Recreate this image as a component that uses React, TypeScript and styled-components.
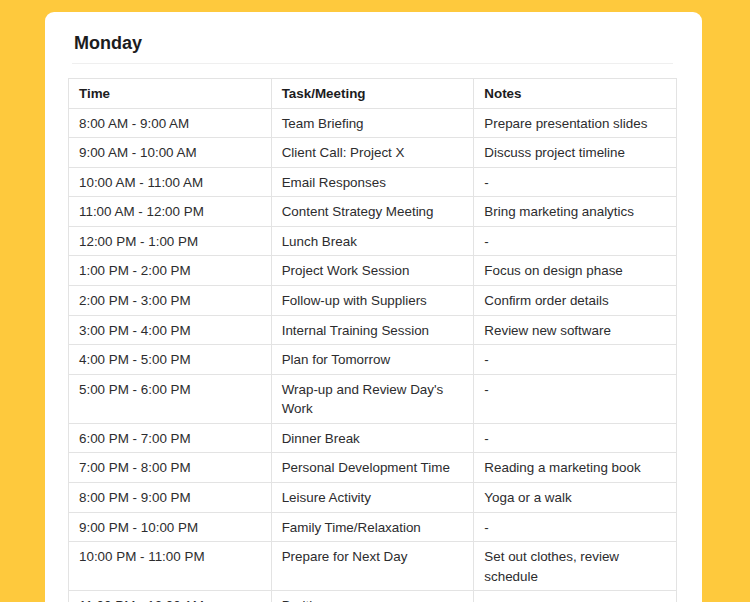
import React from "react";
import styled, { createGlobalStyle } from "styled-components";

type Row = { time: string; task: string; notes: string };

const rows: Row[] = [
  { time: "8:00 AM - 9:00 AM", task: "Team Briefing", notes: "Prepare presentation slides" },
  { time: "9:00 AM - 10:00 AM", task: "Client Call: Project X", notes: "Discuss project timeline" },
  { time: "10:00 AM - 11:00 AM", task: "Email Responses", notes: "-" },
  { time: "11:00 AM - 12:00 PM", task: "Content Strategy Meeting", notes: "Bring marketing analytics" },
  { time: "12:00 PM - 1:00 PM", task: "Lunch Break", notes: "-" },
  { time: "1:00 PM - 2:00 PM", task: "Project Work Session", notes: "Focus on design phase" },
  { time: "2:00 PM - 3:00 PM", task: "Follow-up with Suppliers", notes: "Confirm order details" },
  { time: "3:00 PM - 4:00 PM", task: "Internal Training Session", notes: "Review new software" },
  { time: "4:00 PM - 5:00 PM", task: "Plan for Tomorrow", notes: "-" },
  { time: "5:00 PM - 6:00 PM", task: "Wrap-up and Review Day's Work", notes: "-" },
  { time: "6:00 PM - 7:00 PM", task: "Dinner Break", notes: "-" },
  { time: "7:00 PM - 8:00 PM", task: "Personal Development Time", notes: "Reading a marketing book" },
  { time: "8:00 PM - 9:00 PM", task: "Leisure Activity", notes: "Yoga or a walk" },
  { time: "9:00 PM - 10:00 PM", task: "Family Time/Relaxation", notes: "-" },
  { time: "10:00 PM - 11:00 PM", task: "Prepare for Next Day", notes: "Set out clothes, review schedule" },
  { time: "11:00 PM - 12:00 AM", task: "Bedtime", notes: "-" },
];

const App: React.FC = () => {
  return (
    <Page>
      <GlobalStyle />
      <Card>
        <DayHeader>
          <DayTitle>Monday</DayTitle>
        </DayHeader>
        <Schedule>
          <thead>
            <tr>
              <HeadCell>Time</HeadCell>
              <HeadCell>Task/Meeting</HeadCell>
              <HeadCell>Notes</HeadCell>
            </tr>
          </thead>
          <tbody>
            {rows.map((r) => (
              <tr key={r.time}>
                <Cell>{r.time}</Cell>
                <Cell>{r.task}</Cell>
                <Cell>{r.notes}</Cell>
              </tr>
            ))}
          </tbody>
        </Schedule>
      </Card>
    </Page>
  );
};

const GlobalStyle = createGlobalStyle`
  html, body {
    margin: 0;
    background: #fec93d;
    font-family: "Liberation Sans", Arial, sans-serif;
    -webkit-font-smoothing: antialiased;
  }
`;

const Page = styled.div`
  height: 602px;
  overflow: hidden;
  padding: 12px 48px 0 45px;
  box-sizing: border-box;
`;

const Card = styled.div`
  background: #ffffff;
  border-radius: 9px;
  padding: 19px 25px 24px 23px;
`;

const DayHeader = styled.div`
  margin: 0 4px 15px 4px;
  padding: 0 0 8px 2px;
  border-bottom: 1px solid #efefef;
`;

const DayTitle = styled.h2`
  margin: 0;
  font-size: 18px;
  line-height: 24px;
  font-weight: 700;
  color: #1c1c1e;
`;

const Schedule = styled.table`
  width: 100%;
  border-collapse: collapse;
  table-layout: fixed;
  border: 1px solid #e3e3e3;
  font-size: 13.4px;
  color: #2c2c2e;
  margin-top: -1px;
`;

const HeadCell = styled.th`
  text-align: left;
  font-weight: 700;
  color: #1c1c1e;
  padding: 5px 10px 4px 10px;
  line-height: 19.5px;
  border: 1px solid #e3e3e3;
  vertical-align: top;
`;

const Cell = styled.td`
  padding: 5px 10px 4px 10px;
  line-height: 19.58px;
  border: 1px solid #e3e3e3;
  vertical-align: top;
`;

export default App;
